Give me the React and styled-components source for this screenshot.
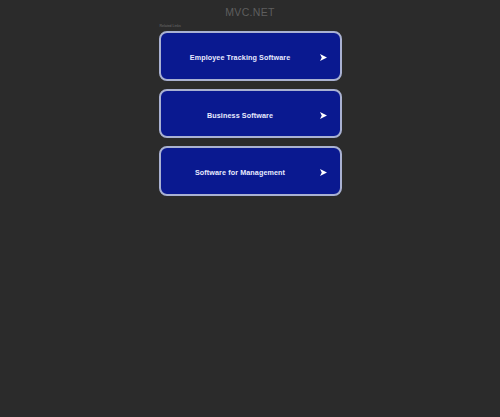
import React from "react";
import styled, { createGlobalStyle } from "styled-components";

const Global = createGlobalStyle`
  html, body { margin: 0; padding: 0; background: #2b2b2b; }
  body { font-family: "Liberation Sans", Arial, sans-serif; }
`;

const Page = styled.div`
  min-height: 417px;
  display: flex;
  flex-direction: column;
  align-items: center;
`;

const Title = styled.div`
  margin-top: 6px;
  height: 13px;
  font-size: 10.5px;
  line-height: 13px;
  color: #5e5e5e;
  letter-spacing: 0.3px;
`;

const Column = styled.div`
  width: 183px;
  display: flex;
  flex-direction: column;
  margin-top: 5px;
`;

const Label = styled.div`
  font-size: 3.5px;
  line-height: 5px;
  height: 5px;
  color: #6e6e6e;
  margin-left: 1px;
  margin-bottom: 2px;
`;

const List = styled.div`
  display: flex;
  flex-direction: column;
  gap: 8px;
`;

const LinkButton = styled.a`
  box-sizing: border-box;
  height: 49.5px;
  display: flex;
  align-items: center;
  padding: 4px 13px 0 8px;
  background: #0a1990;
  border: 2px solid #a9b1d2;
  border-radius: 8px;
  text-decoration: none;
  cursor: pointer;
`;

const LinkText = styled.span`
  flex: 1;
  text-align: center;
  color: #e8ebff;
  font-weight: bold;
  font-size: 7.2px;
  letter-spacing: 0.1px;
`;

const Arrow = styled.svg`
  width: 7px;
  height: 7px;
  margin-left: 8px;
  flex: none;
`;

const links = [
  "Employee Tracking Software",
  "Business Software",
  "Software for Management",
];

export default function App() {
  return (
    <>
      <Global />
      <Page>
        <Title>MVC.NET</Title>
        <Column>
          <Label>Related Links</Label>
          <List>
            {links.map((l) => (
              <LinkButton key={l}>
                <LinkText>{l}</LinkText>
                <Arrow viewBox="0 0 10 10">
                  <path d="M0 0 L10 5 L0 10 L2.5 5 Z" fill="#ffffff" />
                </Arrow>
              </LinkButton>
            ))}
          </List>
        </Column>
      </Page>
    </>
  );
}
